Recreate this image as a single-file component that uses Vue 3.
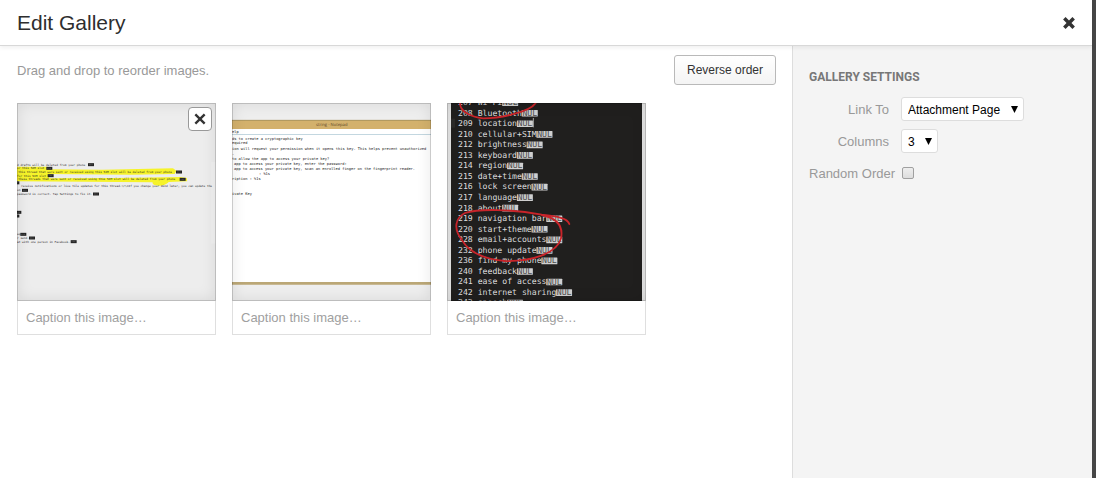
<script setup>
import { ref } from 'vue'

const linkTo = ref('Attachment Page')
const columns = ref('3')
const randomOrder = ref(false)

const drafts = [
  { x: 42, y: 424, text: 'd drafts will be deleted from your phone', nul: 468 },
  { x: 42, y: 446, text: 'or this SIM slot', nul: 218 },
  { x: 50, y: 468, text: 'this thread that were sent or received using this SIM slot will be deleted from your phone', nul: 996 },
  { x: 42, y: 490, text: 'for this SIM slot', nul: 226 },
  { x: 50, y: 512, text: 'these threads that were sent or received using this SIM slot will be deleted from your phone', nul: 1018 },
  { x: 38, y: 533, text: '', nul: 20 },
  { x: 66, y: 554, text: 'receive notifications or live tile updates for this thread.\\r\\nIf you change your mind later, you can update the', nul: 0 },
  { x: 42, y: 578, text: 'on', nul: 72 },
  { x: 42, y: 600, text: 'password is correct. Tap Settings to fix it.', nul: 498 },
  { x: 42, y: 710, text: '', nul: 32 },
  { x: 42, y: 732, text: '', nul: 20 },
  { x: 42, y: 842, text: 'ug', nul: 62 },
  { x: 42, y: 864, text: 'r send.', nul: 114 },
  { x: 42, y: 886, text: 'at with one person in Facebook.', nul: 364 }
]

const notes = [
  { x: 42, y: 228, text: 'elp' },
  { x: 42, y: 268, text: 'ds to create a cryptographic key' },
  { x: 42, y: 294, text: 'equired' },
  { x: 42, y: 328, text: 'ion will request your permission when it opens this key. This helps prevent unauthorized' },
  { x: 42, y: 360, text: '.' },
  { x: 42, y: 388, text: 'to allow the app to access your private key?' },
  { x: 54, y: 418, text: 'app to access your private key, enter the password:' },
  { x: 54, y: 447, text: 'app to access your private key, scan an enrolled finger on the fingerprint reader.' },
  { x: 204, y: 479, text: ': %1s' },
  { x: 42, y: 509, text: 'ription  : %1s' },
  { x: 42, y: 600, text: 'ivate Key' }
]

const strings = [
  ['207', 'Wi-Fi'], ['208', 'Bluetooth'], ['209', 'location'], ['210', 'cellular+SIM'],
  ['212', 'brightness'], ['213', 'keyboard'], ['214', 'region'], ['215', 'date+time'],
  ['216', 'lock screen'], ['217', 'language'], ['218', 'about'], ['219', 'navigation bar'],
  ['220', 'start+theme'], ['228', 'email+accounts'], ['232', 'phone update'],
  ['236', 'find my phone'], ['240', 'feedback'], ['241', 'ease of access'],
  ['242', 'internet sharing'], ['243', 'speech']
].map(([id, name], i) => ({ id, name, y: 60 + i * 63.3, nul: 226 + name.length * 29.4 }))

const images = ref([
  { kind: 'drafts', caption: '' },
  { kind: 'notepad', caption: '' },
  { kind: 'strings', caption: '' }
])
</script>

<template>
  <div class="backdrop">
    <section class="modal" aria-labelledby="title">
      <header class="title-bar">
        <h1 id="title">Edit Gallery</h1>
        <button class="close" type="button" aria-label="Close">
          <svg viewBox="0 0 12 12" width="14" height="14"><path d="M2 2 10 10M10 2 2 10" /></svg>
        </button>
      </header>

      <div class="body">
        <main class="content">
          <div class="toolbar">
            <p>Drag and drop to reorder images.</p>
            <button class="reverse" type="button">Reverse order</button>
          </div>

          <ul class="gallery">
            <li v-for="(image, i) in images" :key="image.kind" class="card">
              <div class="preview">
                <svg v-if="image.kind === 'drafts'" class="picture" viewBox="42 48 1194 1188">
                  <rect x="42" y="48" width="1194" height="1188" fill="#ededed" />
                  <path d="M1208 402h28v490h-28z" fill="#f1f1f1" />
                  <path d="M42 430h182l4 16 330 2 420-8 20 14-10 20-260 4-500-4 8 18-5 8 400-2 390-6 40 6 2 20-110 4q-20 22-60 22-40 0-38-20L42 518z" fill="#f6f32a" />
                  <g class="mono tiny">
                    <g v-for="line in drafts" :key="line.y">
                      <text v-if="line.text" :x="line.x" :y="line.y">{{ line.text }}</text>
                      <g v-if="line.nul">
                        <rect :x="line.nul" :y="line.y - 15" width="36" height="18" fill="#242424" />
                        <path :d="`M${line.nul + 6} ${line.y - 6}h22`" stroke="#8a8a8a" stroke-width="3" stroke-dasharray="5 3" />
                      </g>
                    </g>
                  </g>
                </svg>

                <svg v-else-if="image.kind === 'notepad'" class="picture" viewBox="42 48 1194 1188">
                  <rect x="42" y="48" width="1194" height="1188" fill="#eee" />
                  <rect x="42" y="150" width="1194" height="54" fill="#d3b16c" />
                  <path d="M42 152h1194" stroke="#a58f5c" stroke-width="5" />
                  <rect x="42" y="204" width="1194" height="920" fill="#fff" />
                  <path d="M42 237h1194" stroke="#a5c3d0" stroke-width="4" />
                  <path d="M42 1130h1194" stroke="#bba776" stroke-width="16" />
                  <text class="window-title" x="546" y="188">string - Notepad</text>
                  <g class="mono note">
                    <text v-for="line in notes" :key="line.y" :x="line.x" :y="line.y">{{ line.text }}</text>
                  </g>
                </svg>

                <svg v-else class="picture" viewBox="42 48 1194 1188">
                  <rect x="42" y="48" width="1194" height="1188" fill="#e4e4e4" />
                  <rect x="66" y="48" width="1146" height="1188" fill="#201f1e" />
                  <rect x="66" y="142" width="24" height="54" fill="#2b2a29" />
                  <g v-for="row in strings" :key="row.id" class="mono code">
                    <text x="108" :y="row.y">{{ row.id }}</text>
                    <text x="226" :y="row.y">{{ row.name }}</text>
                    <rect :x="row.nul" :y="row.y - 34" width="96" height="40" rx="3" fill="#cfcfcf" />
                    <text class="nul" :x="row.nul + 4" :y="row.y + 1">NUL</text>
                  </g>
                  <path d="M560 138v56" stroke="#eee" stroke-width="4" />
                  <g fill="none" stroke="#c8242a" stroke-width="11" stroke-linecap="round">
                    <path d="M120 48c0 50 60 84 140 92 110 0 280-40 314-92" />
                    <path d="M776 774c-10-34-70-46-166-56-180-34-380-36-460-10-60 30-70 96-20 160 40 70 120 116 260 128 150 4 310-40 336-136 14-70-20-120-116-140" />
                  </g>
                </svg>
                <button v-if="i === 0" class="remove" type="button" aria-label="Remove image">
                  <svg viewBox="0 0 12 12" width="14" height="14"><path d="M2 2 10 10M10 2 2 10" /></svg>
                </button>
              </div>
              <input v-model="image.caption" class="caption" type="text" placeholder="Caption this image…" aria-label="Caption this image" />
            </li>
          </ul>
        </main>

        <aside class="settings">
          <h2>GALLERY SETTINGS</h2>
          <div class="row">
            <label for="link-to">Link To</label>
            <div class="select">
              <select id="link-to" v-model="linkTo">
                <option>Attachment Page</option>
                <option>Media File</option>
                <option>None</option>
              </select>
              <svg viewBox="0 0 7 7" width="7" height="7"><path d="M0 0h7L3.500 7z" /></svg>
            </div>
          </div>
          <div class="row">
            <label for="columns">Columns</label>
            <div class="select">
              <select id="columns" v-model="columns">
                <option v-for="n in 9" :key="n">{{ n }}</option>
              </select>
              <svg viewBox="0 0 7 7" width="7" height="7"><path d="M0 0h7L3.500 7z" /></svg>
            </div>
          </div>
          <div class="row wide">
            <label for="random">Random Order</label>
            <input id="random" v-model="randomOrder" type="checkbox" />
          </div>
        </aside>
      </div>
    </section>
  </div>
</template>

<style>
body {
  margin: 0;
}
</style>

<style scoped>
* {
  box-sizing: border-box;
}
.backdrop {
  display: flex;
  min-height: 100vh;
  padding-right: 4px;
  background: #464646;
  font-family: "Liberation Sans", Arial, sans-serif;
  font-size: 13px;
  line-height: 16px;
}
.modal {
  display: flex;
  flex: 1;
  flex-direction: column;
  background: #fff;
}
.title-bar {
  z-index: 1;
  display: flex;
  align-items: center;
  justify-content: space-between;
  padding: 0 16px 0 17px;
  border-bottom: 1px solid #d8d8d8;
  background: #fff;
  box-shadow: 0 2px 4px rgba(0, 0, 0, 0.06);
}
h1 {
  margin: 0;
  color: #2e2e2e;
  font-size: 21px;
  font-weight: 400;
  line-height: 45px;
}
button {
  font: inherit;
}
.close {
  display: flex;
  padding: 0;
  border: 0;
  background: none;
}
.close svg,
.remove svg {
  fill: none;
  stroke: #333;
  stroke-width: 3;
}
.remove svg {
  stroke-width: 2;
}
.body {
  display: flex;
  flex: 1;
}
.content {
  flex: 1;
  padding: 9px 16px 16px 17px;
}
.toolbar {
  display: flex;
  align-items: center;
  justify-content: space-between;
}
.toolbar p {
  margin: 0;
  padding-top: 2px;
  color: #999;
}
.reverse {
  height: 30px;
  padding: 0 12px;
  border: 1px solid #b9b9b9;
  border-radius: 3px;
  background: linear-gradient(#fff, #f4f4f4);
  color: #333;
  font-size: 12px;
}
.gallery {
  display: flex;
  flex-wrap: wrap;
  gap: 16px;
  margin: 18px 0 0;
  padding: 0;
  list-style: none;
}
.card {
  width: 199px;
}
.preview {
  position: relative;
}
.preview::after {
  position: absolute;
  inset: 0;
  box-shadow: inset 0 0 15px rgba(0, 0, 0, 0.1), inset 0 0 0 1px rgba(0, 0, 0, 0.16);
  content: "";
  pointer-events: none;
}
.picture {
  display: block;
  width: 100%;
  text-rendering: geometricPrecision;
}
.remove {
  position: absolute;
  z-index: 1;
  top: 4px;
  right: 4px;
  display: flex;
  align-items: center;
  justify-content: center;
  width: 24px;
  height: 24px;
  padding: 0;
  border: 1px solid #999;
  border-radius: 4px;
  background: #fff;
}
.mono {
  font-family: "DejaVu Sans Mono", monospace;
  white-space: pre;
}
.tiny {
  fill: #222;
  font-size: 17px;
}
.note {
  fill: #222;
  font-size: 22px;
}
.window-title {
  fill: #5b4628;
  font-family: "Open Sans", sans-serif;
  font-size: 25px;
}
.code {
  fill: #dedede;
  font-size: 49px;
}
.nul {
  fill: #4c4c4c;
}
.caption {
  display: block;
  width: 100%;
  height: 34px;
  padding: 0 8px;
  border: 1px solid #dfdfdf;
  border-top: 0;
  background: #fff;
  color: #333;
  font: inherit;
}
.caption::placeholder {
  color: #a0a0a0;
  opacity: 1;
}
.settings {
  display: flex;
  flex: 0 0 300px;
  flex-direction: column;
  gap: 8px;
  padding: 23px 16px;
  border-left: 1px solid #ddd;
  background: #f4f4f4;
  color: #999;
}
h2 {
  margin: 0 0 4px;
  color: #777;
  font-family: Roboto, sans-serif;
  font-size: 12px;
  font-weight: 700;
  line-height: 16px;
}
.row {
  display: grid;
  grid-template-columns: 80px auto;
  justify-content: start;
  align-items: center;
  column-gap: 12px;
  height: 24px;
}
.row.wide {
  grid-template-columns: 86px auto;
  column-gap: 7px;
}
.row label {
  justify-self: end;
  padding-top: 2px;
  white-space: nowrap;
}
.select {
  display: grid;
  align-items: center;
}
.select select,
.select svg {
  grid-area: 1 / 1;
}
.select svg {
  justify-self: end;
  margin-right: 6px;
  pointer-events: none;
}
select {
  height: 24px;
  padding: 1px 22px 0 6px;
  border: 1px solid #ddd;
  border-radius: 3px;
  appearance: none;
  background: #fff;
  color: #000;
  font: inherit;
  font-size: 12px;
}
input[type="checkbox"] {
  width: 12px;
  height: 12px;
  margin: 0;
  border: 1px solid #a0a0a0;
  border-radius: 2px;
  appearance: none;
  background: linear-gradient(#eee, #ddd);
}
input[type="checkbox"]:checked {
  background: #666;
}
</style>
